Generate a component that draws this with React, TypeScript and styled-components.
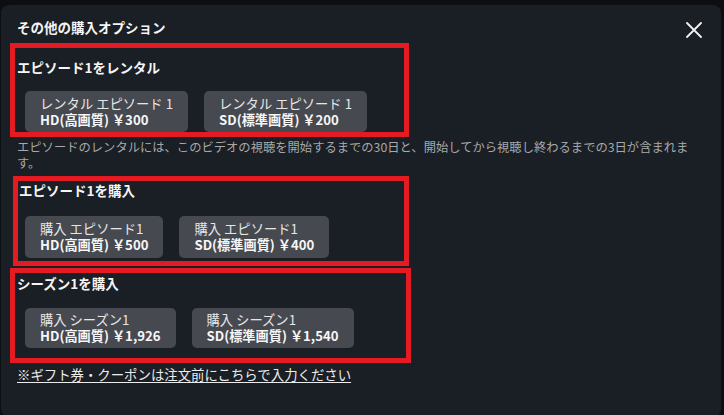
import React from 'react';
import styled, { createGlobalStyle } from 'styled-components';

const GlobalStyle = createGlobalStyle`
	html, body {
		margin: 0;
		padding: 0;
		background: #0c0e12;
		overflow: hidden;
	}
	body {
		font-family: 'Noto Sans CJK JP', 'Noto Sans', sans-serif;
		color: #f2f2f2;
	}
`;

const Page = styled.div`
	width: 724px;
	height: 415px;
	padding: 5px 3px 0 1px;
	box-sizing: border-box;
`;

const Modal = styled.div`
	background: #1a1e25;
	border-radius: 8px;
	height: 412px;
	padding: 0 0 0 9px;
	box-sizing: border-box;
	display: flex;
	flex-direction: column;
	align-items: flex-start;
`;

const Header = styled.div`
	height: 38px;
	width: 100%;
	box-sizing: border-box;
	display: flex;
	justify-content: space-between;
	align-items: flex-start;
	padding: 13px 19px 0 7px;
`;

const Title = styled.h2`
	margin: 0;
	font-size: 13.5px;
	line-height: 18px;
	font-weight: 700;
	color: #f5f5f5;
`;

const CloseButton = styled.button`
	border: none;
	background: none;
	padding: 0;
	margin-top: 4px;
	width: 16px;
	height: 16px;
	cursor: pointer;
	display: block;
`;

const Section = styled.section<{ $w: number; $h: number; $dx: number; $pt: number }>`
	border: 5px solid #e51b23;
	width: ${(p) => p.$w}px;
	height: ${(p) => p.$h}px;
	margin-left: ${(p) => p.$dx}px;
	padding-top: ${(p) => p.$pt}px;
	box-sizing: border-box;
	display: flex;
	flex-direction: column;
	align-items: flex-start;
`;

const SectionTitle = styled.h3<{ $ml: number }>`
	margin: 0 0 0 ${(p) => p.$ml}px;
	font-size: 13.5px;
	line-height: 18px;
	font-weight: 700;
	color: #f5f5f5;
`;

const ButtonRow = styled.div<{ $ml: number; $mt: number }>`
	display: flex;
	gap: 16px;
	margin: ${(p) => p.$mt}px 0 0 ${(p) => p.$ml}px;
`;

const OptionButton = styled.button<{ $h: number }>`
	border: none;
	background: #46494f;
	border-radius: 5px;
	height: ${(p) => p.$h}px;
	padding: 0 15px;
	display: flex;
	flex-direction: column;
	justify-content: center;
	align-items: flex-start;
	font-family: inherit;
	cursor: pointer;
`;

const OptionLabel = styled.span`
	font-size: 13.3px;
	line-height: 16px;
	color: #e6e6e6;
	white-space: nowrap;
`;

const OptionPrice = styled.span`
	font-size: 13.2px;
	line-height: 16px;
	font-weight: 700;
	color: #f7f7f7;
	white-space: nowrap;
`;

const Note = styled.p`
	margin: 2px 0 0 7px;
	width: 680px;
	font-size: 12.3px;
	line-height: 16px;
	color: #a8a8a8;
	height: 37px;
`;

const GiftLink = styled.a`
	margin: 3px 0 0 7px;
	font-size: 13.4px;
	line-height: 16px;
	color: #ececec;
	text-decoration: underline;
	text-underline-offset: 2px;
	cursor: pointer;
`;

const sections = [
	{
		title: 'エピソード1をレンタル',
		w: 399, h: 94, dx: 0, pt: 10, tml: 2, bml: 10, bmt: 15, bh: 41,
		options: [
			{ label: 'レンタル エピソード 1', price: 'HD(高画質) ￥300' },
			{ label: 'レンタル エピソード 1', price: 'SD(標準画質) ￥200' },
		],
	},
	{
		title: 'エピソード1を購入',
		w: 396, h: 90, dx: 3, pt: 0, tml: 1, bml: 7, bmt: 17, bh: 42,
		options: [
			{ label: '購入 エピソード1', price: 'HD(高画質) ￥500' },
			{ label: '購入 エピソード1', price: 'SD(標準画質) ￥400' },
		],
	},
	{
		title: 'シーズン1を購入',
		w: 401, h: 95, dx: 0, pt: 1, tml: 2, bml: 10, bmt: 16, bh: 40,
		options: [
			{ label: '購入 シーズン1', price: 'HD(高画質) ￥1,926' },
			{ label: '購入 シーズン1', price: 'SD(標準画質) ￥1,540' },
		],
	},
];

const renderSection = (s: (typeof sections)[number]) => (
	<Section key={s.title} $w={s.w} $h={s.h} $dx={s.dx} $pt={s.pt}>
		<SectionTitle $ml={s.tml}>{s.title}</SectionTitle>
		<ButtonRow $ml={s.bml} $mt={s.bmt}>
			{s.options.map((o, i) => (
				<OptionButton key={i} $h={s.bh}>
					<OptionLabel>{o.label}</OptionLabel>
					<OptionPrice>{o.price}</OptionPrice>
				</OptionButton>
			))}
		</ButtonRow>
	</Section>
);

const Spacer = styled.div`
	height: 2px;
`;

const App = () => {
	return (
		<Page>
			<GlobalStyle />
			<Modal>
				<Header>
					<Title>その他の購入オプション</Title>
					<CloseButton aria-label="閉じる">
						<svg width="16" height="16" viewBox="0 0 16 16">
							<path d="M1 1 L15 15 M15 1 L1 15" stroke="#f2f2f2" strokeWidth="1.8" strokeLinecap="round" />
						</svg>
					</CloseButton>
				</Header>

				{renderSection(sections[0])}
				<Note>
					エピソードのレンタルには、このビデオの視聴を開始するまでの30日と、開始してから視聴し終わるまでの3日が含まれます。
				</Note>
				{renderSection(sections[1])}
				<Spacer />
				{renderSection(sections[2])}

				<GiftLink>※ギフト券・クーポンは注文前にこちらで入力ください</GiftLink>
			</Modal>
		</Page>
	);
};

export default App;
